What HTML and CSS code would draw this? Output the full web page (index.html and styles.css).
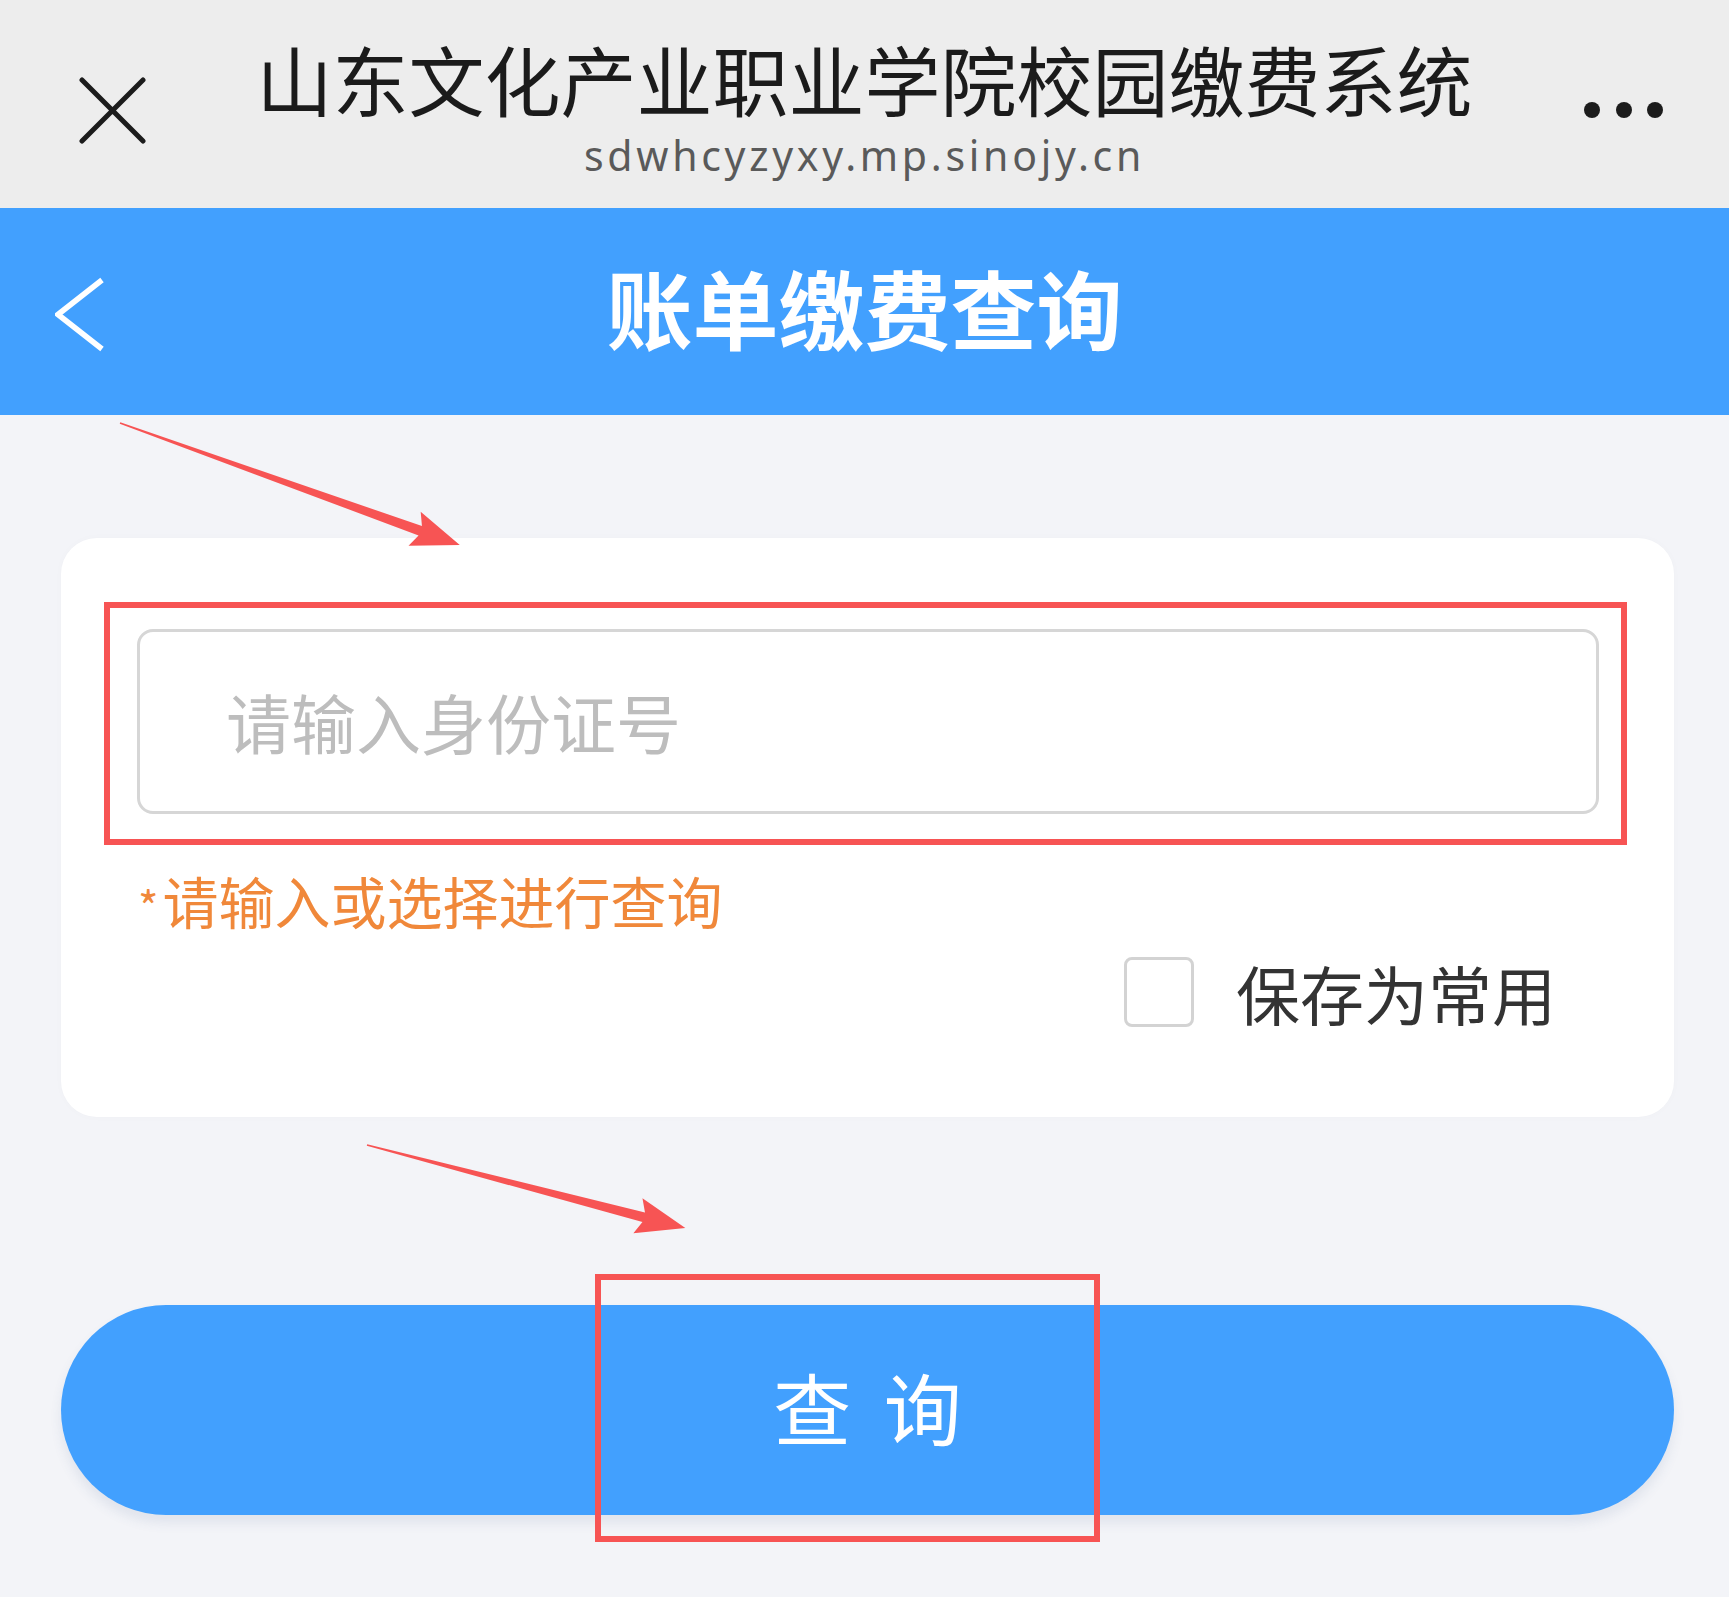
FILE: index.html
```html
<!DOCTYPE html>
<html lang="zh-CN">
<head>
<meta charset="utf-8">
<title>账单缴费查询</title>
<link rel="stylesheet" href="styles.css">
</head>
<body>
<div class="page">
  <header class="topbar">
    <div class="topbar-left">
      <svg class="icon-close" viewBox="0 0 67 67" aria-hidden="true"><path d="M3 3 L64 64 M64 3 L3 64" fill="none" stroke="#1c1c1c" stroke-width="5" stroke-linecap="round"/></svg>
    </div>
    <div class="topbar-title">
      <div class="site-name">山东文化产业职业学院校园缴费系统</div>
      <div class="site-url">sdwhcyzyxy.mp.sinojy.cn</div>
    </div>
    <div class="topbar-right">
      <svg class="icon-more" viewBox="0 0 79 16" aria-hidden="true"><circle cx="8" cy="8" r="8" fill="#1c1c1c"/><circle cx="40" cy="8" r="8" fill="#1c1c1c"/><circle cx="71" cy="8" r="8" fill="#1c1c1c"/></svg>
    </div>
  </header>
  <nav class="navbar">
    <div class="nav-left">
      <svg class="icon-back" viewBox="0 0 50 75" aria-hidden="true"><path d="M47 3 L3 37.5 L47 72" fill="none" stroke="#ffffff" stroke-width="5.5"/></svg>
    </div>
    <h1 class="nav-title">账单缴费查询</h1>
    <div class="nav-right"></div>
  </nav>
  <main class="content">
    <section class="card">
      <div class="id-input"><span class="placeholder">请输入身份证号</span></div>
      <p class="hint"><span class="star">*</span>请输入或选择进行查询</p>
      <div class="save-row">
        <span class="checkbox"></span>
        <span class="save-text">保存为常用</span>
      </div>
    </section>
    <button class="query-btn" type="button">查 询</button>
  </main>
  <svg class="annotations" viewBox="0 0 1729 1597" aria-hidden="true">
    <g fill="#f75454">
      <g transform="translate(120 423) rotate(19.74)">
        <polygon points="0,-0.8 319,-5 313,-18 361,0 313,18 319,5 0,0.8"/>
      </g>
      <g transform="translate(367 1145) rotate(14.63)">
        <polygon points="0,-0.8 286,-5 280,-18 329,0 280,18 286,5 0,0.8"/>
      </g>
    </g>
    <g fill="none" stroke="#f75454" stroke-width="6">
      <rect x="107" y="605" width="1517" height="237"/>
      <rect x="598" y="1277" width="499" height="262"/>
    </g>
  </svg>
</div>
</body>
</html>
```

FILE: styles.css
```css
* {
  box-sizing: border-box;
  margin: 0;
  padding: 0;
}

html,
body {
  width: 1729px;
  height: 1597px;
}

body {
  background: #f3f4f8;
  font-family: "Noto Sans CJK SC", "Noto Sans", sans-serif;
  overflow: hidden;
}

.page {
  position: relative;
  width: 1729px;
  height: 1597px;
}

/* top browser bar */
.topbar {
  height: 208px;
  background: #ededed;
  display: grid;
  grid-template-columns: 1fr auto 1fr;
}

.topbar-left {
  display: flex;
  align-items: center;
  padding-left: 79px;
  padding-top: 12px;
}

.icon-close {
  width: 67px;
  height: 67px;
  display: block;
}

.topbar-title {
  padding-top: 40px;
  text-align: center;
}

.site-name {
  font-size: 76px;
  line-height: 76px;
  color: #1b1b1b;
  white-space: nowrap;
}

.site-url {
  font-family: "Noto Sans", sans-serif;
  font-size: 41px;
  line-height: 40px;
  letter-spacing: 3.7px;
  margin-top: 19px;
  color: #5a5a5a;
}

.topbar-right {
  display: flex;
  align-items: center;
  justify-content: flex-end;
  padding-right: 66px;
  padding-top: 12px;
}

.icon-more {
  width: 79px;
  height: 16px;
  display: block;
}

/* blue nav */
.navbar {
  height: 207px;
  background: #42a0fe;
  display: grid;
  grid-template-columns: 1fr auto 1fr;
  align-items: center;
}

.nav-left {
  display: flex;
  align-items: center;
  padding-left: 55px;
  padding-top: 6px;
}

.icon-back {
  width: 50px;
  height: 75px;
  display: block;
}

.nav-title {
  font-size: 86px;
  line-height: 86px;
  font-weight: 700;
  color: #ffffff;
  white-space: nowrap;
  margin-top: -10px;
}

/* content */
.content {
  padding: 123px 55px 0 61px;
}

.card {
  background: #ffffff;
  border-radius: 36px;
  padding: 91px 75px 90px 76px;
  box-shadow: 0 0 8px rgba(0, 0, 0, 0.02);
}

.id-input {
  height: 185px;
  border: 3px solid #d6d6d6;
  border-radius: 16px;
  display: flex;
  align-items: center;
  padding-left: 86px;
}

.placeholder {
  font-size: 65px;
  line-height: 1;
  color: #bdbdbd;
}

.hint {
  margin-top: 58px;
  font-size: 56px;
  line-height: 56px;
  color: #f0883a;
  padding-left: 1px;
}

.star {
  font-size: 44px;
  margin-right: 4px;
}

.save-row {
  margin-top: 24px;
  display: flex;
  justify-content: flex-end;
  align-items: center;
  gap: 42px;
  padding-right: 43px;
}

.checkbox {
  width: 70px;
  height: 70px;
  border: 3px solid #d3d3d3;
  border-radius: 8px;
  background: #ffffff;
}

.save-text {
  font-size: 64px;
  line-height: 1;
  color: #333333;
}

.query-btn {
  display: block;
  width: 100%;
  height: 210px;
  margin-top: 188px;
  border: none;
  border-radius: 105px;
  background: #42a0fe;
  color: #ffffff;
  font-family: "Noto Sans CJK SC", sans-serif;
  font-size: 78px;
  line-height: 1;
  padding-bottom: 8px;
  word-spacing: 15px;
  box-shadow: 0 8px 12px rgba(60, 90, 140, 0.1);
}

/* screenshot annotations drawn over the page */
.annotations {
  position: absolute;
  top: 0;
  left: 0;
  width: 1729px;
  height: 1597px;
  pointer-events: none;
}
```
